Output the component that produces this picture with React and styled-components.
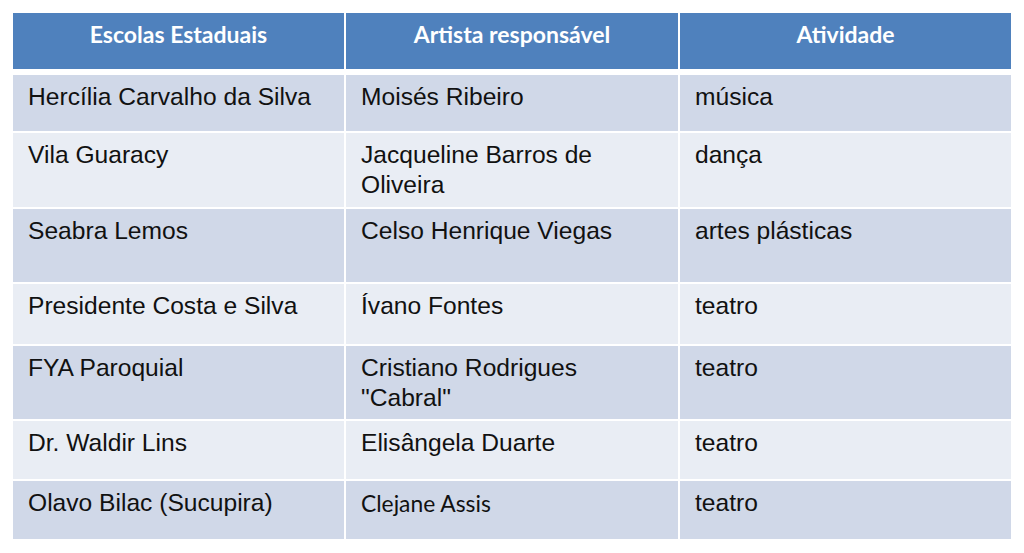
import React from "react";
import styled, { createGlobalStyle } from "styled-components";

const Global = createGlobalStyle`
  html, body { margin: 0; padding: 0; background: #ffffff; }
  body { font-family: "Liberation Sans", Arial, sans-serif; }
`;

const Page = styled.div`
  width: 1024px;
  height: 553px;
  box-sizing: border-box;
  padding: 13px 0 0 13px;
  background: #ffffff;
`;

const Table = styled.div`
  display: flex;
  flex-direction: column;
  gap: 2px;
  width: 998px;
`;

const Row = styled.div`
  display: grid;
  grid-template-columns: 331px 332px 331px;
  column-gap: 2px;
  height: ${(p) => p.$h}px;
  margin-bottom: ${(p) => (p.$head ? 4 : 0)}px;
`;

const HeadCell = styled.div`
  background: #4f81bd;
  color: #ffffff;
  font-family: "Lato", "Open Sans", sans-serif;
  font-weight: 700;
  font-size: 23px;
  line-height: 26px;
  text-align: center;
  padding-top: 8px;
  box-sizing: border-box;
`;

const Cell = styled.div`
  background: ${(p) => (p.$odd ? "#d0d8e8" : "#e9edf4")};
  color: #111111;
  font-family: ${(p) =>
    p.$alt ? `"Lato", "Open Sans", sans-serif` : `"Liberation Sans", Arial, sans-serif`};
  font-size: ${(p) => (p.$alt ? 22.8 : 24.6)}px;
  line-height: 30px;
  padding: 7px 12px 0 15px;
  box-sizing: border-box;
`;

const rows = [
  { h: 56, c: ["Hercília Carvalho da Silva", "Moisés Ribeiro", "música"] },
  { h: 74, c: ["Vila Guaracy", "Jacqueline Barros de Oliveira", "dança"] },
  { h: 73, c: ["Seabra Lemos", "Celso Henrique Viegas", "artes plásticas"] },
  { h: 60, c: ["Presidente Costa e Silva", "Ívano Fontes", "teatro"] },
  { h: 73, c: ["FYA Paroquial", "Cristiano Rodrigues \"Cabral\"", "teatro"] },
  { h: 58, c: ["Dr. Waldir Lins", "Elisângela Duarte", "teatro"] },
  { h: 58, c: ["Olavo Bilac (Sucupira)", "Clejane Assis", "teatro"], alt: 1 },
];

export default function App() {
  return (
    <Page>
      <Global />
      <Table>
        <Row $h={56} $head>
          <HeadCell>Escolas Estaduais</HeadCell>
          <HeadCell>Artista responsável</HeadCell>
          <HeadCell>Atividade</HeadCell>
        </Row>
        {rows.map((r, i) => (
          <Row key={i} $h={r.h}>
            {r.c.map((t, j) => (
              <Cell key={j} $odd={i % 2 === 0} $alt={r.alt === j}>
                {t}
              </Cell>
            ))}
          </Row>
        ))}
      </Table>
    </Page>
  );
}
